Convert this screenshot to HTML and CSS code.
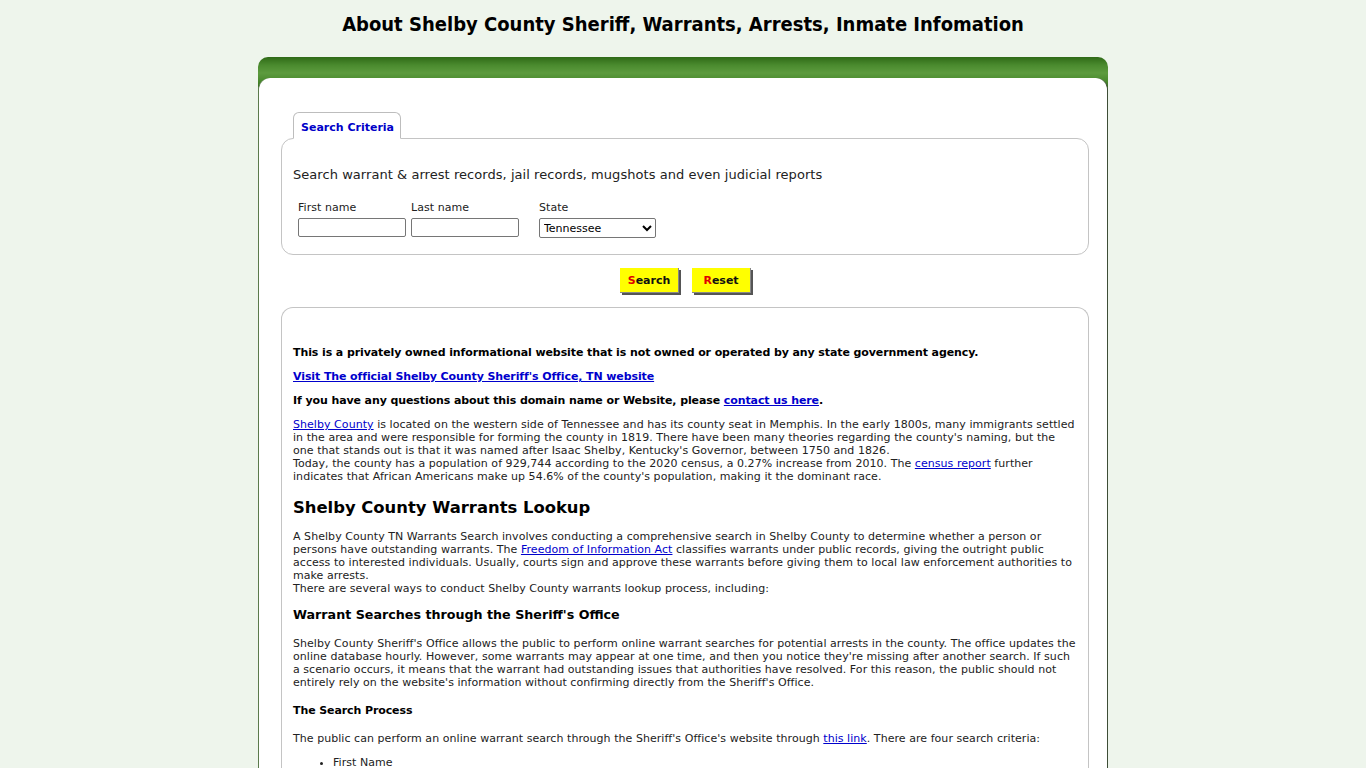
FILE: index.html
```html
<!DOCTYPE html>
<html>
<head>
    <title>About Shelby County Sheriff, Warrants, Arrests, Inmate Infomation</title>
    <link rel="stylesheet" href="styles.css">
</head>
<body>
    <h1 class="page-title">About Shelby County Sheriff, Warrants, Arrests, Inmate Infomation</h1>
    <div class="wrap">
        <div class="panel">
            <div class="tabs">
                <span class="tab">Search Criteria</span>
            </div>
            <div class="box search-box">
                <p class="intro">Search warrant &amp; arrest records, jail records, mugshots and even judicial reports</p>
                <div class="fields">
                    <label class="field">
                        <span>First name</span>
                        <input type="text" class="text-input">
                    </label>
                    <label class="field">
                        <span>Last name</span>
                        <input type="text" class="text-input">
                    </label>
                    <label class="field state-field">
                        <span>State</span>
                        <select class="state-select">
                            <option>Tennessee</option>
                        </select>
                    </label>
                </div>
            </div>
            <div class="buttons">
                <button class="btn"><span class="key">S</span>earch</button>
                <button class="btn"><span class="key">R</span>eset</button>
            </div>
            <div class="box content">
                <p class="strong">This is a privately owned informational website that is not owned or operated by any state government agency.</p>
                <p class="strong"><a href="#">Visit The official Shelby County Sheriff's Office, TN website</a></p>
                <p class="strong">If you have any questions about this domain name or Website, please <a href="#">contact us here</a>.</p>
                <p><a href="#">Shelby County</a> is located on the western side of Tennessee and has its county seat in Memphis. In the early 1800s, many immigrants settled in the area and were responsible for forming the county in 1819. There have been many theories regarding the county's naming, but the one that stands out is that it was named after Isaac Shelby, Kentucky's Governor, between 1750 and 1826.<br>Today, the county has a population of 929,744 according to the 2020 census, a 0.27% increase from 2010. The <a href="#">census report</a> further indicates that African Americans make up 54.6% of the county's population, making it the dominant race.</p>
                <h2>Shelby County Warrants Lookup</h2>
                <p>A Shelby County TN Warrants Search involves conducting a comprehensive search in Shelby County to determine whether a person or persons have outstanding warrants. The <a href="#">Freedom of Information Act</a> classifies warrants under public records, giving the outright public access to interested individuals. Usually, courts sign and approve these warrants before giving them to local law enforcement authorities to make arrests.<br>There are several ways to conduct Shelby County warrants lookup process, including:</p>
                <h3>Warrant Searches through the Sheriff's Office</h3>
                <p>Shelby County Sheriff's Office allows the public to perform online warrant searches for potential arrests in the county. The office updates the online database hourly. However, some warrants may appear at one time, and then you notice they're missing after another search. If such a scenario occurs, it means that the warrant had outstanding issues that authorities have resolved. For this reason, the public should not entirely rely on the website's information without confirming directly from the Sheriff's Office.</p>
                <h4>The Search Process</h4>
                <p>The public can perform an online warrant search through the Sheriff's Office's website through <a href="#">this link</a>. There are four search criteria:</p>
                <ul>
                    <li>First Name</li>
                    <li>Last Name</li>
                    <li>Date of Birth</li>
                    <li>Warrant Number</li>
                </ul>
            </div>
        </div>
    </div>
</body>
</html>
```

FILE: styles.css
```css
body {
    margin: 0;
    background: #eef5ec;
    font-family: Verdana, "DejaVu Sans", sans-serif;
    letter-spacing: 0.05px;
    color: #111;
}
.page-title {
    margin: 0;
    padding: 12px 0 0;
    height: 46px;
    box-sizing: border-box;
    text-align: center;
    font-family: Tahoma, "DejaVu Sans Condensed", "DejaVu Sans", sans-serif;
    font-size: 20px;
    letter-spacing: 0;
    font-weight: bold;
    color: #000;
}
.wrap {
    width: 850px;
    margin: 11px auto 0;
    padding-top: 21px;
    border-radius: 10px 10px 0 0;
    background: linear-gradient(#2f6a17, #4a8a2e 25%, #5d9b3e 50%, #4a8a2e 75%, #2e6416) 0 0 / 100% 32px no-repeat, #33681b;
}
.panel {
    background: #fff;
    border-radius: 12px 12px 0 0;
    border-left: 1px solid #5b7a4c;
    border-right: 1px solid #3d4d36;
    padding: 34px 18px 0 22px;
    min-height: 700px;
}
.tabs {
    display: flex;
    padding-left: 12px;
    margin-bottom: -1px;
    position: relative;
}
.tab {
    display: block;
    width: 108px;
    height: 27px;
    box-sizing: border-box;
    padding: 8px 0 0 7px;
    border: 1px solid #bdbdbd;
    border-bottom-color: #fff;
    border-radius: 6px 6px 0 0;
    background: #fff;
    color: #0000c8;
    font-size: 11px;
    letter-spacing: 0;
    font-weight: bold;
}
.box {
    border: 1px solid #c4c4c4;
    border-radius: 12px;
}
.search-box {
    height: 117px;
    box-sizing: border-box;
    padding: 28px 11px 0;
}
.intro {
    margin: 0;
    font-size: 13px;
    line-height: 16px;
    color: #222;
}
.fields {
    display: flex;
    margin-top: 18px;
    padding-left: 5px;
}
.field {
    display: flex;
    flex-direction: column;
    gap: 4px;
    font-size: 11px;
    color: #222;
    margin-right: 5px;
}
.state-field {
    margin-left: 15px;
}
.text-input {
    width: 108px;
    height: 19px;
    box-sizing: border-box;
    margin: 0;
    border: 1px solid #767676;
    border-radius: 2px;
}
.state-select {
    width: 117px;
    height: 20px;
    margin: 0;
    font-family: Verdana, "DejaVu Sans", sans-serif;
    font-size: 11px;
    border: 1px solid #767676;
    border-radius: 2px;
    background: #fff;
}
.buttons {
    display: flex;
    justify-content: center;
    gap: 13px;
    padding: 13px 0 14px;
}
.btn {
    width: 59px;
    height: 25px;
    padding: 0;
    background: #ffff00;
    border: none;
    box-shadow: inset -1px -1px 0 #888, 2px 2px 0 #555;
    font-family: Verdana, "DejaVu Sans", sans-serif;
    font-size: 11px;
    font-weight: bold;
    color: #111;
}
.key {
    color: #e00000;
}
.content {
    padding: 27px 11px 20px;
    border-radius: 12px 12px 0 0;
    border-bottom: none;
    font-size: 11px;
    color: #222;
}
.content p {
    margin: 11px 0;
    line-height: 13px;
}
.content .strong {
    font-weight: bold;
    letter-spacing: -0.1px;
    color: #000;
}
.content a {
    color: #0000cc;
}
.content h2 {
    margin: 14px 0 12px;
    font-size: 16.4px;
    line-height: 21px;
    letter-spacing: 0;
    color: #000;
}
.content h3 {
    margin: 12px 0 14px;
    font-size: 12.7px;
    line-height: 16px;
    letter-spacing: 0;
    color: #000;
}
.content h4 {
    margin: 15px 0 15px;
    font-size: 11px;
    letter-spacing: -0.1px;
    color: #000;
}
.content ul {
    margin: 11px 0;
    padding-left: 40px;
    line-height: 13px;
}
.content li {
    margin-bottom: 2px;
}
```
